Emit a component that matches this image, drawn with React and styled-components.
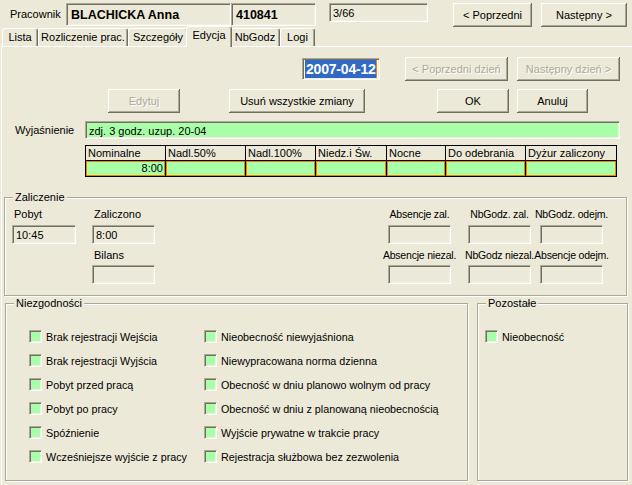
import React from "react";
import styled, { createGlobalStyle } from "styled-components";

const BG = "#ece9d8";
const GREEN = "#a8ffa8";

const GlobalStyle = createGlobalStyle`
  html, body {
    margin: 0;
    padding: 0;
    background: ${BG};
  }
  body {
    font-family: "Liberation Sans", Arial, sans-serif;
    font-size: 10.5px;
    color: #000;
  }
`;

const Window = styled.div`
  width: 632px;
  height: 485px;
  overflow: hidden;
  background: ${BG};
`;

/* ---------- header ---------- */
const Header = styled.div`
  display: flex;
  align-items: flex-start;
  height: 28px;
  padding-top: 3px;
  box-sizing: border-box;
`;
const HeaderLabel = styled.span`
  width: 56px;
  padding-left: 10px;
  line-height: 23px;
  font-size: 11px;
`;
const SunkenBox = styled.div`
  box-sizing: border-box;
  width: ${p => p.$w}px;
  height: ${p => p.$h || 19}px;
  margin-left: ${p => p.$ml || 0}px;
  margin-top: ${p => p.$mt || 0}px;
  border-style: solid;
  border-width: 1px;
  border-color: #aca899 #fff #fff #aca899;
  box-shadow: inset 1px 1px 0 #716f64, inset -1px -1px 0 #f1efe2;
  background: ${p => p.$bg || BG};
  padding: 1px 3px 0;
  display: flex;
  align-items: center;
  justify-content: ${p => (p.$right ? "flex-end" : "flex-start")};
  white-space: nowrap;
  overflow: hidden;
  font-size: 11px;
`;
const BigValue = styled(SunkenBox)`
  font-size: 12.5px;
  font-weight: bold;
  padding-left: 4px;
`;

const Button = styled.button`
  box-sizing: border-box;
  width: ${p => p.$w}px;
  height: ${p => p.$h || 24}px;
  margin-left: ${p => p.$ml || 0}px;
  padding: 0;
  border: none;
  background: ${BG};
  box-shadow: inset -1px -1px 0 #716f64, inset 1px 1px 0 #fff,
    inset -2px -2px 0 #aca899;
  font-family: inherit;
  font-size: 11px;
  white-space: nowrap;
  color: ${p => (p.disabled ? "#aca899" : "#000")};
  text-shadow: ${p => (p.disabled ? "1px 1px 0 #fff" : "none")};
  flex: none;
`;

/* ---------- tabs ---------- */
const TabStrip = styled.div`
  display: flex;
  align-items: flex-end;
  height: 18px;
  padding-left: 2px;
  position: relative;
  z-index: 1;
`;
const Tab = styled.div`
  box-sizing: border-box;
  width: ${p => (p.$active ? p.$w + 4 : p.$w)}px;
  height: ${p => (p.$active ? 21 : 18)}px;
  margin: 0 ${p => (p.$active ? -2 : 0)}px ${p => (p.$active ? -1 : 0)}px;
  border-left: 1px solid #fff;
  border-top: 1px solid #fff;
  border-right: 1px solid #716f64;
  box-shadow: inset -1px 0 0 #aca899;
  border-radius: 3px 3px 0 0;
  background: ${BG};
  text-align: center;
  line-height: ${p => (p.$active ? 17 : 16)}px;
  font-size: 11px;
  white-space: nowrap;
  position: relative;
  z-index: ${p => (p.$active ? 2 : 1)};
`;

const Panel = styled.div`
  border-top: 1px solid #fff;
  border-left: 1px solid #fff;
  margin-left: 1px;
  height: 460px;
  display: flex;
  flex-direction: column;
`;

/* ---------- rows ---------- */
const Row = styled.div`
  display: flex;
  align-items: ${p => p.$align || "center"};
  height: ${p => p.$h}px;
  margin-top: ${p => p.$mt}px;
  flex: none;
`;

const DateField = styled.div`
  box-sizing: border-box;
  width: 78px;
  height: 22px;
  margin-left: 300px;
  border-style: solid;
  border-width: 1px;
  border-color: #aca899 #fff #fff #aca899;
  box-shadow: inset 1px 1px 0 #716f64, inset -1px -1px 0 #f1efe2;
  background: #fff;
  padding: 1px 0 0 2px;
  display: flex;
  align-items: flex-start;
  white-space: nowrap;
`;
const Selected = styled.span`
  background: #316ac5;
  color: #fff;
  font-size: 14px;
  font-weight: bold;
  line-height: 18px;
  letter-spacing: -0.2px;
  padding: 0 0 0 1px;
  border-right: 1px solid #f08000;
`;

const FieldLabel = styled.span`
  width: 70px;
  padding-left: 13px;
  font-size: 11px;
`;

/* ---------- grid ---------- */
const Grid = styled.div`
  margin: 6px 0 0 83px;
  width: max-content;
  display: grid;
  grid-template-columns: 79px 79px 69px 70px 58px 79px 90px;
  grid-template-rows: 14px 15px;
  gap: 1px;
  background: #000;
  border: 1px solid #000;
  flex: none;
`;
const HeadCell = styled.div`
  background: ${BG};
  padding-left: 2px;
  line-height: 14px;
  font-size: 11px;
  white-space: nowrap;
  overflow: hidden;
`;
const DataCell = styled.div`
  box-sizing: border-box;
  background: ${GREEN};
  border: 1px solid #f08000;
  text-align: right;
  padding-right: 1px;
  line-height: 13px;
  font-size: 11px;
`;

/* ---------- group boxes ---------- */
const GroupBox = styled.div`
  position: relative;
  box-sizing: border-box;
  width: ${p => p.$w}px;
  height: ${p => p.$h}px;
  margin-left: ${p => p.$ml || 0}px;
  margin-top: ${p => p.$mt || 0}px;
  border: 1px solid #aca899;
  box-shadow: inset 1px 1px 0 #fff, 1px 1px 0 #fff;
  display: flex;
  flex: none;
`;
const GroupTitle = styled.span`
  position: absolute;
  top: -7px;
  left: 8px;
  padding: 0 2px;
  background: ${BG};
  line-height: 13px;
  font-size: 11px;
`;

const ValueColumn = styled.div`
  display: flex;
  flex-direction: column;
  align-items: ${p => (p.$center ? "center" : "flex-start")};
  width: ${p => p.$w}px;
  margin-left: ${p => p.$ml}px;
  padding-top: 10px;
`;
const ValueLabel = styled.span`
  line-height: 13px;
  white-space: nowrap;
  padding-left: ${p => (p.$center ? 0 : 2)}px;
  margin-top: ${p => p.$mt || 0}px;
  font-size: ${p => (p.$center ? 10.5 : 11)}px;
  letter-spacing: ${p => (p.$center ? -0.2 : 0)}px;
`;

const CheckColumn = styled.div`
  display: flex;
  flex-direction: column;
  gap: 11px;
  width: ${p => p.$w}px;
  margin-left: ${p => p.$ml}px;
  padding-top: 26px;
`;
const CheckRow = styled.div`
  display: flex;
  align-items: center;
  height: 13px;
  white-space: nowrap;
  font-size: 10.75px;
`;
const Box = styled.span`
  box-sizing: border-box;
  width: 13px;
  height: 13px;
  flex: none;
  border-style: solid;
  border-width: 1px;
  border-color: #aca899 #fff #fff #aca899;
  box-shadow: inset 1px 1px 0 #716f64, inset -1px -1px 0 #f1efe2;
  background: ${GREEN};
  margin-right: 4px;
`;

const Check = ({ children }) => (
  <CheckRow>
    <Box />
    {children}
  </CheckRow>
);

const tabs = [
  ["Lista", 36],
  ["Rozliczenie prac.", 90],
  ["Szczegóły", 60],
  ["Edycja", 42, true],
  ["NbGodz", 50],
  ["Logi", 35],
];

const columns = [
  ["Nominalne", "8:00"],
  ["Nadl.50%", ""],
  ["Nadl.100%", ""],
  ["Niedz.i Św.", ""],
  ["Nocne", ""],
  ["Do odebrania", ""],
  ["Dyżur zaliczony", ""],
];

const left = [
  "Brak rejestracji Wejścia",
  "Brak rejestracji Wyjścia",
  "Pobyt przed pracą",
  "Pobyt po pracy",
  "Spóźnienie",
  "Wcześniejsze wyjście z pracy",
];
const right = [
  "Nieobecność niewyjaśniona",
  "Niewypracowana norma dzienna",
  "Obecność w dniu planowo wolnym od pracy",
  "Obecność w dniu z planowaną nieobecnością",
  "Wyjście prywatne w trakcie pracy",
  "Rejestracja służbowa bez zezwolenia",
];

const App = () => (
  <Window>
    <GlobalStyle />
    <Header>
      <HeaderLabel>Pracownik</HeaderLabel>
      <BigValue $w={165} $h={23}>BLACHICKA Anna</BigValue>
      <BigValue $w={85} $h={23}>410841</BigValue>
      <SunkenBox $w={99} $h={19} $ml={13}>3/66</SunkenBox>
      <Button $w={79} $ml={25}>&lt; Poprzedni</Button>
      <Button $w={86} $ml={9}>Następny &gt;</Button>
    </Header>

    <TabStrip>
      {tabs.map(([name, w, active]) => (
        <Tab key={name} $w={w} $active={active}>{name}</Tab>
      ))}
    </TabStrip>

    <Panel>
      <Row $h={24} $mt={10}>
        <DateField>
          <Selected>2007-04-12</Selected>
        </DateField>
        <Button $w={103} $ml={25} disabled>&lt; Poprzedni dzień</Button>
        <Button $w={103} $ml={9} disabled>Następny dzień &gt;</Button>
      </Row>

      <Row $h={24} $mt={8}>
        <Button $w={72} $ml={106} disabled>Edytuj</Button>
        <Button $w={136} $ml={49}>Usuń wszystkie zmiany</Button>
        <Button $w={72} $ml={72}>OK</Button>
        <Button $w={71} $ml={8}>Anuluj</Button>
      </Row>

      <Row $h={18} $mt={8}>
        <FieldLabel>Wyjaśnienie</FieldLabel>
        <SunkenBox $w={535} $h={18} $bg={GREEN}>zdj. 3 godz. uzup. 20-04</SunkenBox>
      </Row>

      <Grid>
        {columns.map(([h]) => <HeadCell key={h}>{h}</HeadCell>)}
        {columns.map(([h, v]) => <DataCell key={h}>{v}</DataCell>)}
      </Grid>

      <GroupBox $w={623} $h={99} $ml={2} $mt={20}>
        <GroupTitle>Zaliczenie</GroupTitle>
        <ValueColumn $w={64} $ml={7}>
          <ValueLabel>Pobyt</ValueLabel>
          <SunkenBox $w={64} $mt={4}>10:45</SunkenBox>
        </ValueColumn>
        <ValueColumn $w={63} $ml={16}>
          <ValueLabel>Zaliczono</ValueLabel>
          <SunkenBox $w={63} $mt={4}>8:00</SunkenBox>
          <ValueLabel $mt={5}>Bilans</ValueLabel>
          <SunkenBox $w={63} $mt={3} />
        </ValueColumn>
        <ValueColumn $w={63} $ml={233} $center>
          <ValueLabel $center>Absencje zal.</ValueLabel>
          <SunkenBox $w={63} $mt={4} />
          <ValueLabel $center $mt={5}>Absencje niezal.</ValueLabel>
          <SunkenBox $w={63} $mt={3} />
        </ValueColumn>
        <ValueColumn $w={63} $ml={17} $center>
          <ValueLabel $center>NbGodz. zal.</ValueLabel>
          <SunkenBox $w={63} $mt={4} />
          <ValueLabel $center $mt={5}>NbGodz niezal.</ValueLabel>
          <SunkenBox $w={63} $mt={3} />
        </ValueColumn>
        <ValueColumn $w={63} $ml={9} $center>
          <ValueLabel $center>NbGodz. odejm.</ValueLabel>
          <SunkenBox $w={63} $mt={4} />
          <ValueLabel $center $mt={5}>Absencje odejm.</ValueLabel>
          <SunkenBox $w={63} $mt={3} />
        </ValueColumn>
      </GroupBox>

      <Row $h={178} $mt={7} $align="flex-start">
        <GroupBox $w={463} $h={178} $ml={3}>
          <GroupTitle>Niezgodności</GroupTitle>
          <CheckColumn $w={175} $ml={23}>
            {left.map(t => <Check key={t}>{t}</Check>)}
          </CheckColumn>
          <CheckColumn $w={250} $ml={0}>
            {right.map(t => <Check key={t}>{t}</Check>)}
          </CheckColumn>
        </GroupBox>
        <GroupBox $w={151} $h={178} $ml={9}>
          <GroupTitle>Pozostałe</GroupTitle>
          <CheckColumn $w={140} $ml={7}>
            <Check>Nieobecność</Check>
          </CheckColumn>
        </GroupBox>
      </Row>
    </Panel>
  </Window>
);

export default App;
